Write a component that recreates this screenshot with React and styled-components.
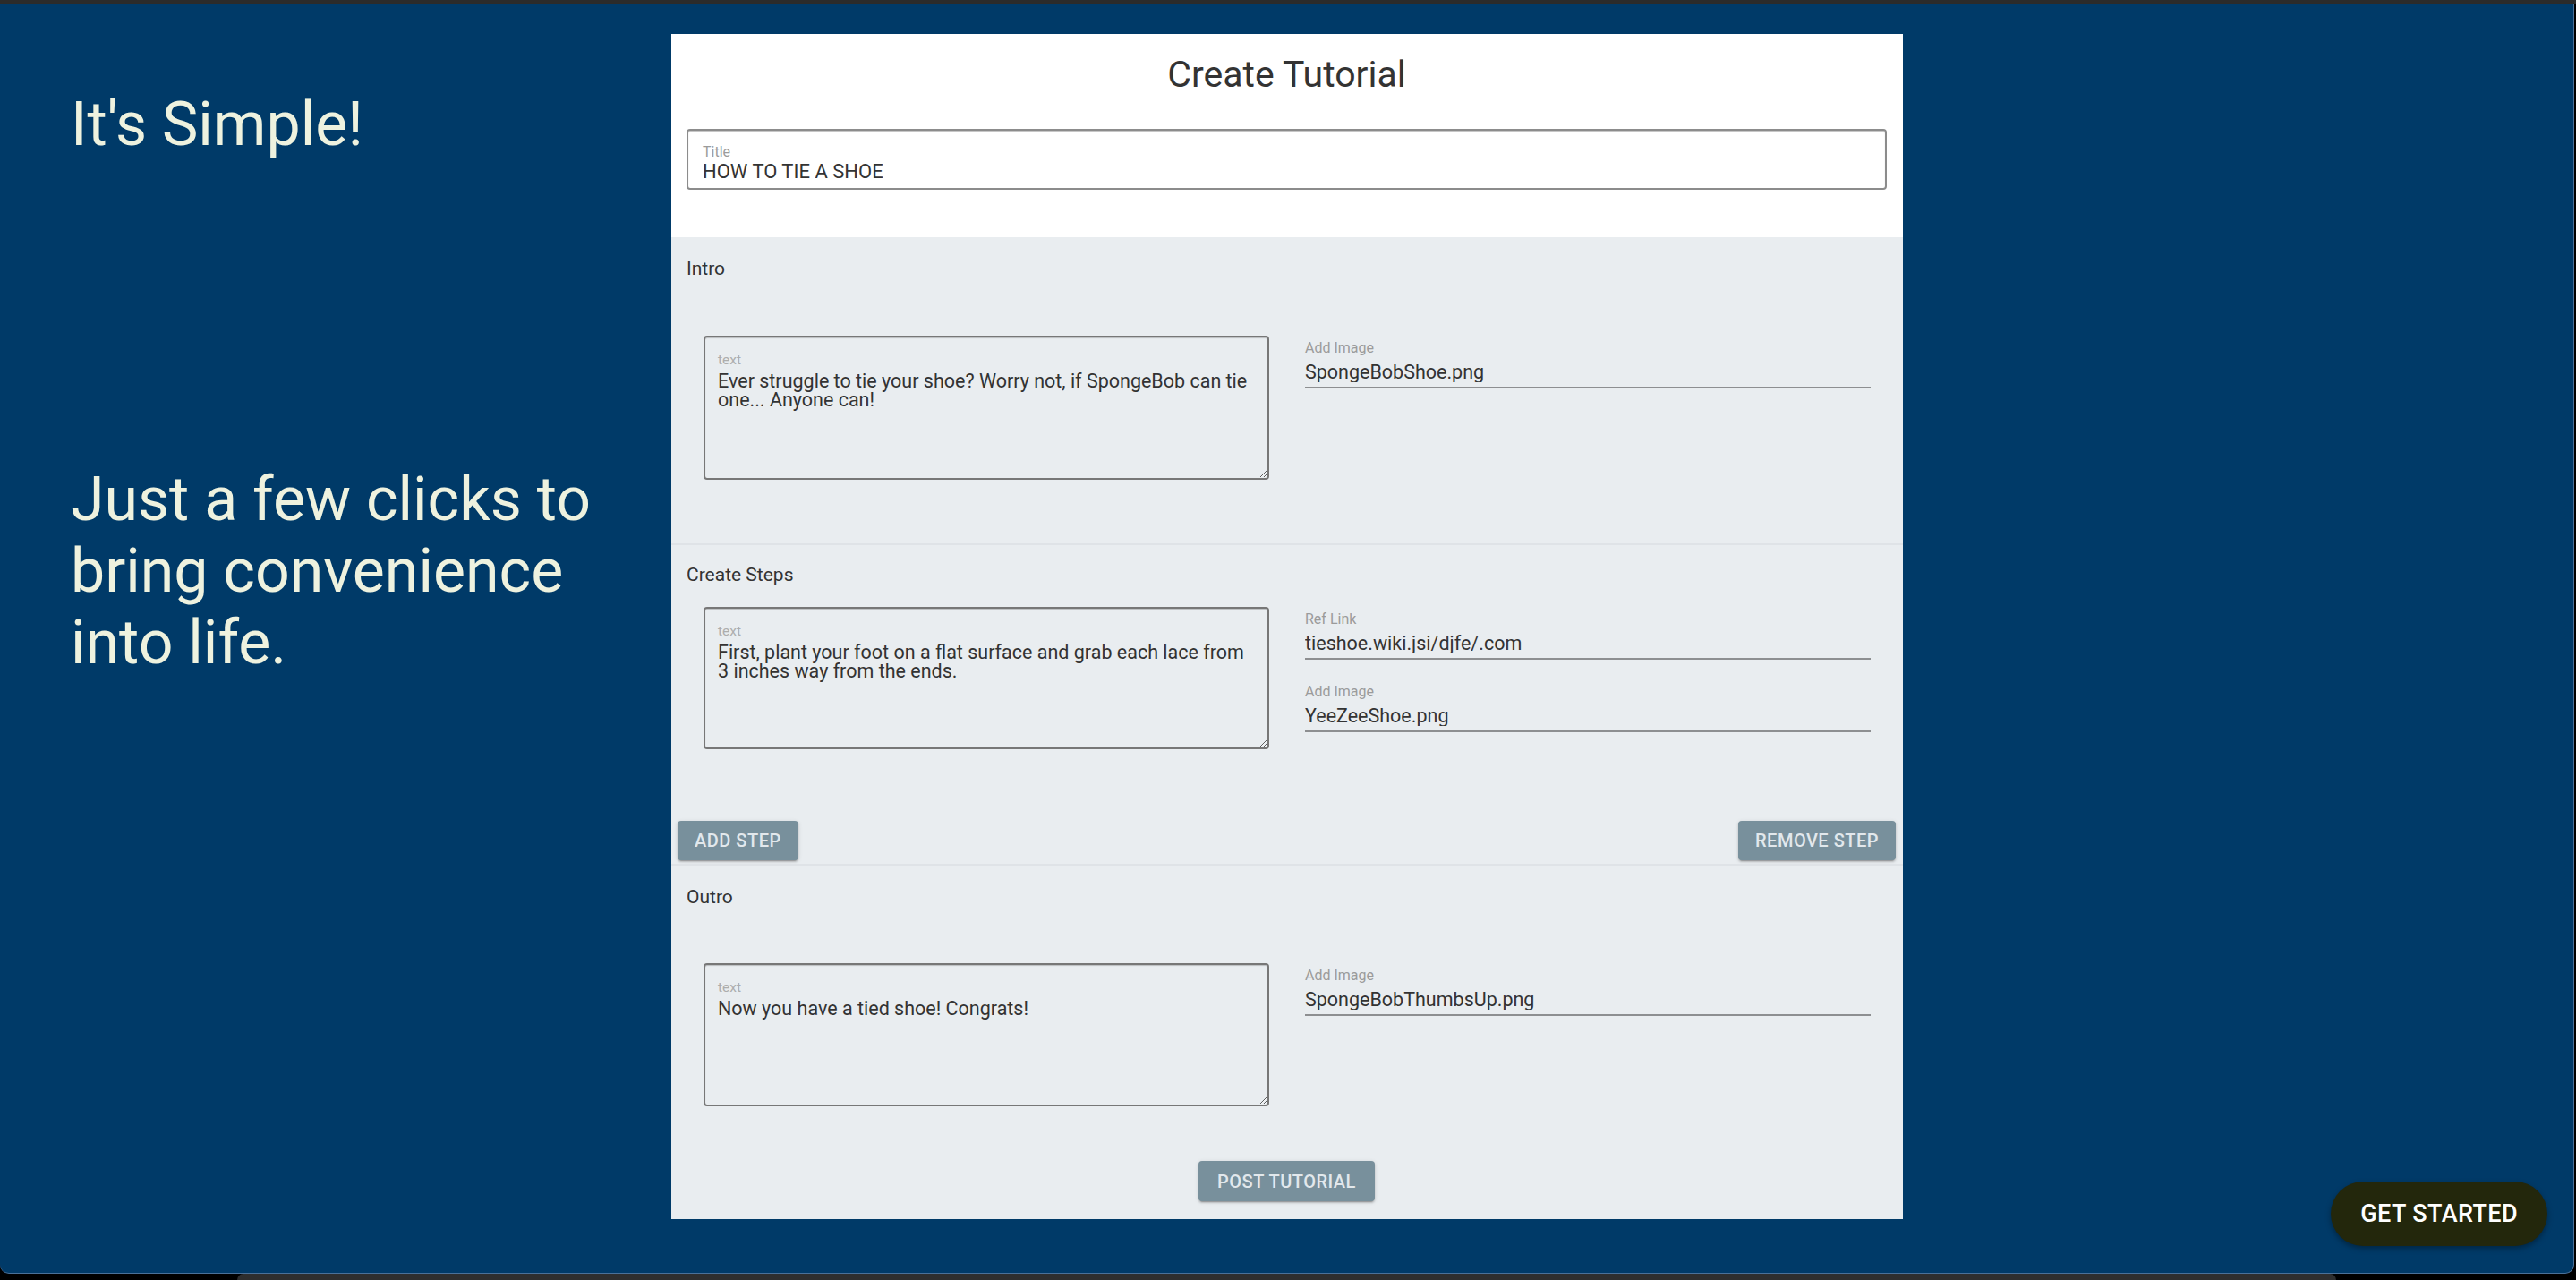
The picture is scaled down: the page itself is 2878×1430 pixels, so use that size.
import styled, { createGlobalStyle } from 'styled-components';

const GlobalStyle = createGlobalStyle`
    * {
        box-sizing: border-box;
    }
    html, body {
        margin: 0;
        padding: 0;
        background: #000;
    }
    body {
        font-family: Roboto, 'Liberation Sans', sans-serif;
    }
`

const Frame = styled.div`
    height: 100vh;
    display: flex;
    flex-direction: column;
`

const TopStrip = styled.div`
    height: 4px;
    flex-shrink: 0;
    background: #2b2b2b;
`

const Main = styled.main`
    flex: 1;
    position: relative;
    margin-right: 2px;
    padding-top: 34px;
    display: grid;
    grid-template-columns: 750px 1376px;
    align-items: start;
    background: #003a68;
    border-right: 1px solid #4a7199;
    border-bottom: 1px solid #4a7199;
    border-radius: 0 0 10px 10px;
`

const BottomStrip = styled.div`
    height: 7px;
    flex-shrink: 0;
    padding: 0 268px 0 265px;
    background: #000;
`

const Tab = styled.div`
    height: 100%;
    background: #2e2e2e;
    border-radius: 8px 8px 0 0;
`

const SideCopy = styled.div`
    padding-left: 79px;
    color: #eef2df;
    font-size: 68px;
    line-height: 80px;
`

const Headline = styled.h1`
    margin: 61px 0 0;
    font-size: inherit;
    font-weight: 400;
`

const Tagline = styled.p`
    margin: 339px 0 0;
    width: 620px;
`

const Card = styled.section`
    display: flex;
    flex-direction: column;
    background: #fff;
`

const CardHeader = styled.div`
    padding: 21px 18px 53px 17px;
`

const CardTitle = styled.h2`
    margin: 0 0 37px;
    text-align: center;
    font-size: 41px;
    line-height: 48px;
    font-weight: 400;
    color: #333;
`

const OutlinedField = styled.label`
    display: block;
    height: 68px;
    padding: 16px 16px 0;
    border: 2px solid #8c8c8c;
    border-radius: 4px;
    box-shadow: inset 0 1px 1px rgba(0, 0, 0, 0.25);
`

const FieldLabel = styled.span`
    display: block;
    font-size: ${p => p.$small ? 15.5 : 16}px;
    line-height: 16px;
    color: ${p => p.$small ? '#adadad' : '#9b9b9b'};
`

const FieldInput = styled.input`
    display: block;
    width: 100%;
    height: ${p => p.$h || 24}px;
    margin-top: ${p => p.$mt || 0}px;
    padding: 0;
    border: none;
    outline: none;
    background: transparent;
    font-family: inherit;
    font-size: ${p => p.$size || 21.5}px;
    color: #333;
`

const Section = styled.div`
    background: #e9edf0;
    padding-top: ${p => p.$pt}px;
    padding-bottom: ${p => p.$pb || 0}px;
    border-top: ${p => p.$divided ? '2px solid #dfe3e7' : 'none'};
`

const SectionLabel = styled.div`
    padding-left: 17px;
    font-size: 21px;
    line-height: 24px;
    color: #333;
`

const Row = styled.div`
    display: grid;
    grid-template-columns: 1fr 1fr;
    column-gap: 40px;
    align-items: start;
    padding: 0 36px;
    margin-top: ${p => p.$mt}px;
`

const TextBox = styled.label`
    display: flex;
    flex-direction: column;
    height: ${p => p.$h}px;
    padding: 17px 0 0 14px;
    border: 2px solid #777;
    border-radius: 4px;
    box-shadow: inset 0 1px 1px rgba(0, 0, 0, 0.2);
`

const TextArea = styled.textarea`
    flex: 1;
    margin-top: 5px;
    padding: 0 16px 0 0;
    border: none;
    outline: none;
    overflow: hidden;
    background: transparent;
    font-family: inherit;
    font-size: 21.5px;
    line-height: 21px;
    color: #333;
`

const FieldStack = styled.div`
    display: flex;
    flex-direction: column;
    gap: 22px;
`

const UnderlineField = styled.label`
    display: block;
    padding: 6px 0 5px;
    border-bottom: 2px solid #8d8f91;
`

const ButtonRow = styled.div`
    display: flex;
    justify-content: ${p => p.$center ? 'center' : 'space-between'};
    margin-top: ${p => p.$mt}px;
    padding: 0 8px 0 7px;
`

const ActionButton = styled.button`
    height: ${p => p.$h || 44}px;
    padding: 0 ${p => p.$wide ? 21 : 19}px;
    border: none;
    border-radius: 4px;
    background: #78909c;
    color: #e2e8ec;
    font-family: inherit;
    font-size: 20px;
    font-weight: 500;
    letter-spacing: 0.5px;
    text-transform: uppercase;
    box-shadow: 0 3px 1px -2px rgba(0, 0, 0, 0.2), 0 2px 2px 0 rgba(0, 0, 0, 0.14), 0 1px 5px 0 rgba(0, 0, 0, 0.12);
`

const GetStarted = styled.button`
    position: absolute;
    right: 29px;
    bottom: 30px;
    height: 72px;
    padding: 0 33px;
    border: none;
    border-radius: 36px;
    background: #23270c;
    color: #fff;
    font-family: inherit;
    font-size: 27px;
    font-weight: 500;
    letter-spacing: 0.4px;
    box-shadow: 0 3px 6px rgba(0, 0, 0, 0.35);
`

function Line({ label, value }) {
    return (
        <UnderlineField>
            <FieldLabel>{label}</FieldLabel>
            <FieldInput $mt={6} defaultValue={value} />
        </UnderlineField>
    )
}

function Text({ value, h }) {
    return (
        <TextBox $h={h}>
            <FieldLabel $small>text</FieldLabel>
            <TextArea defaultValue={value} />
        </TextBox>
    )
}

export default function App() {
    return (
        <>
            <GlobalStyle />
            <Frame>
                <TopStrip />
                <Main>
                    <SideCopy>
                        <Headline>It's Simple!</Headline>
                        <Tagline>Just a few clicks to bring convenience into life.</Tagline>
                    </SideCopy>

                    <Card>
                        <CardHeader>
                            <CardTitle>Create Tutorial</CardTitle>
                            <OutlinedField>
                                <FieldLabel>Title</FieldLabel>
                                <FieldInput $h={22} $mt={2} $size={22} defaultValue="HOW TO TIE A SHOE" />
                            </OutlinedField>
                        </CardHeader>

                        <Section $pt={23} $pb={71}>
                            <SectionLabel>Intro</SectionLabel>
                            <Row $mt={63}>
                                <Text h={161} value="Ever struggle to tie your shoe? Worry not, if SpongeBob can tie one... Anyone can!" />
                                <FieldStack>
                                    <Line label="Add Image" value="SpongeBobShoe.png" />
                                </FieldStack>
                            </Row>
                        </Section>

                        <Section $divided $pt={21} $pb={4}>
                            <SectionLabel>Create Steps</SectionLabel>
                            <Row $mt={24}>
                                <Text h={159} value="First, plant your foot on a flat surface and grab each lace from 3 inches way from the ends." />
                                <FieldStack>
                                    <Line label="Ref Link" value="tieshoe.wiki.jsi/djfe/.com" />
                                    <Line label="Add Image" value="YeeZeeShoe.png" />
                                </FieldStack>
                            </Row>
                            <ButtonRow $mt={80}>
                                <ActionButton>Add Step</ActionButton>
                                <ActionButton>Remove Step</ActionButton>
                            </ButtonRow>
                        </Section>

                        <Section $divided $pt={23} $pb={20}>
                            <SectionLabel>Outro</SectionLabel>
                            <Row $mt={62}>
                                <Text h={160} value="Now you have a tied shoe! Congrats!" />
                                <FieldStack>
                                    <Line label="Add Image" value="SpongeBobThumbsUp.png" />
                                </FieldStack>
                            </Row>
                            <ButtonRow $center $mt={61}>
                                <ActionButton $h={45} $wide>Post Tutorial</ActionButton>
                            </ButtonRow>
                        </Section>
                    </Card>

                    <GetStarted>GET STARTED</GetStarted>
                </Main>
                <BottomStrip>
                    <Tab />
                </BottomStrip>
            </Frame>
        </>
    )
}
